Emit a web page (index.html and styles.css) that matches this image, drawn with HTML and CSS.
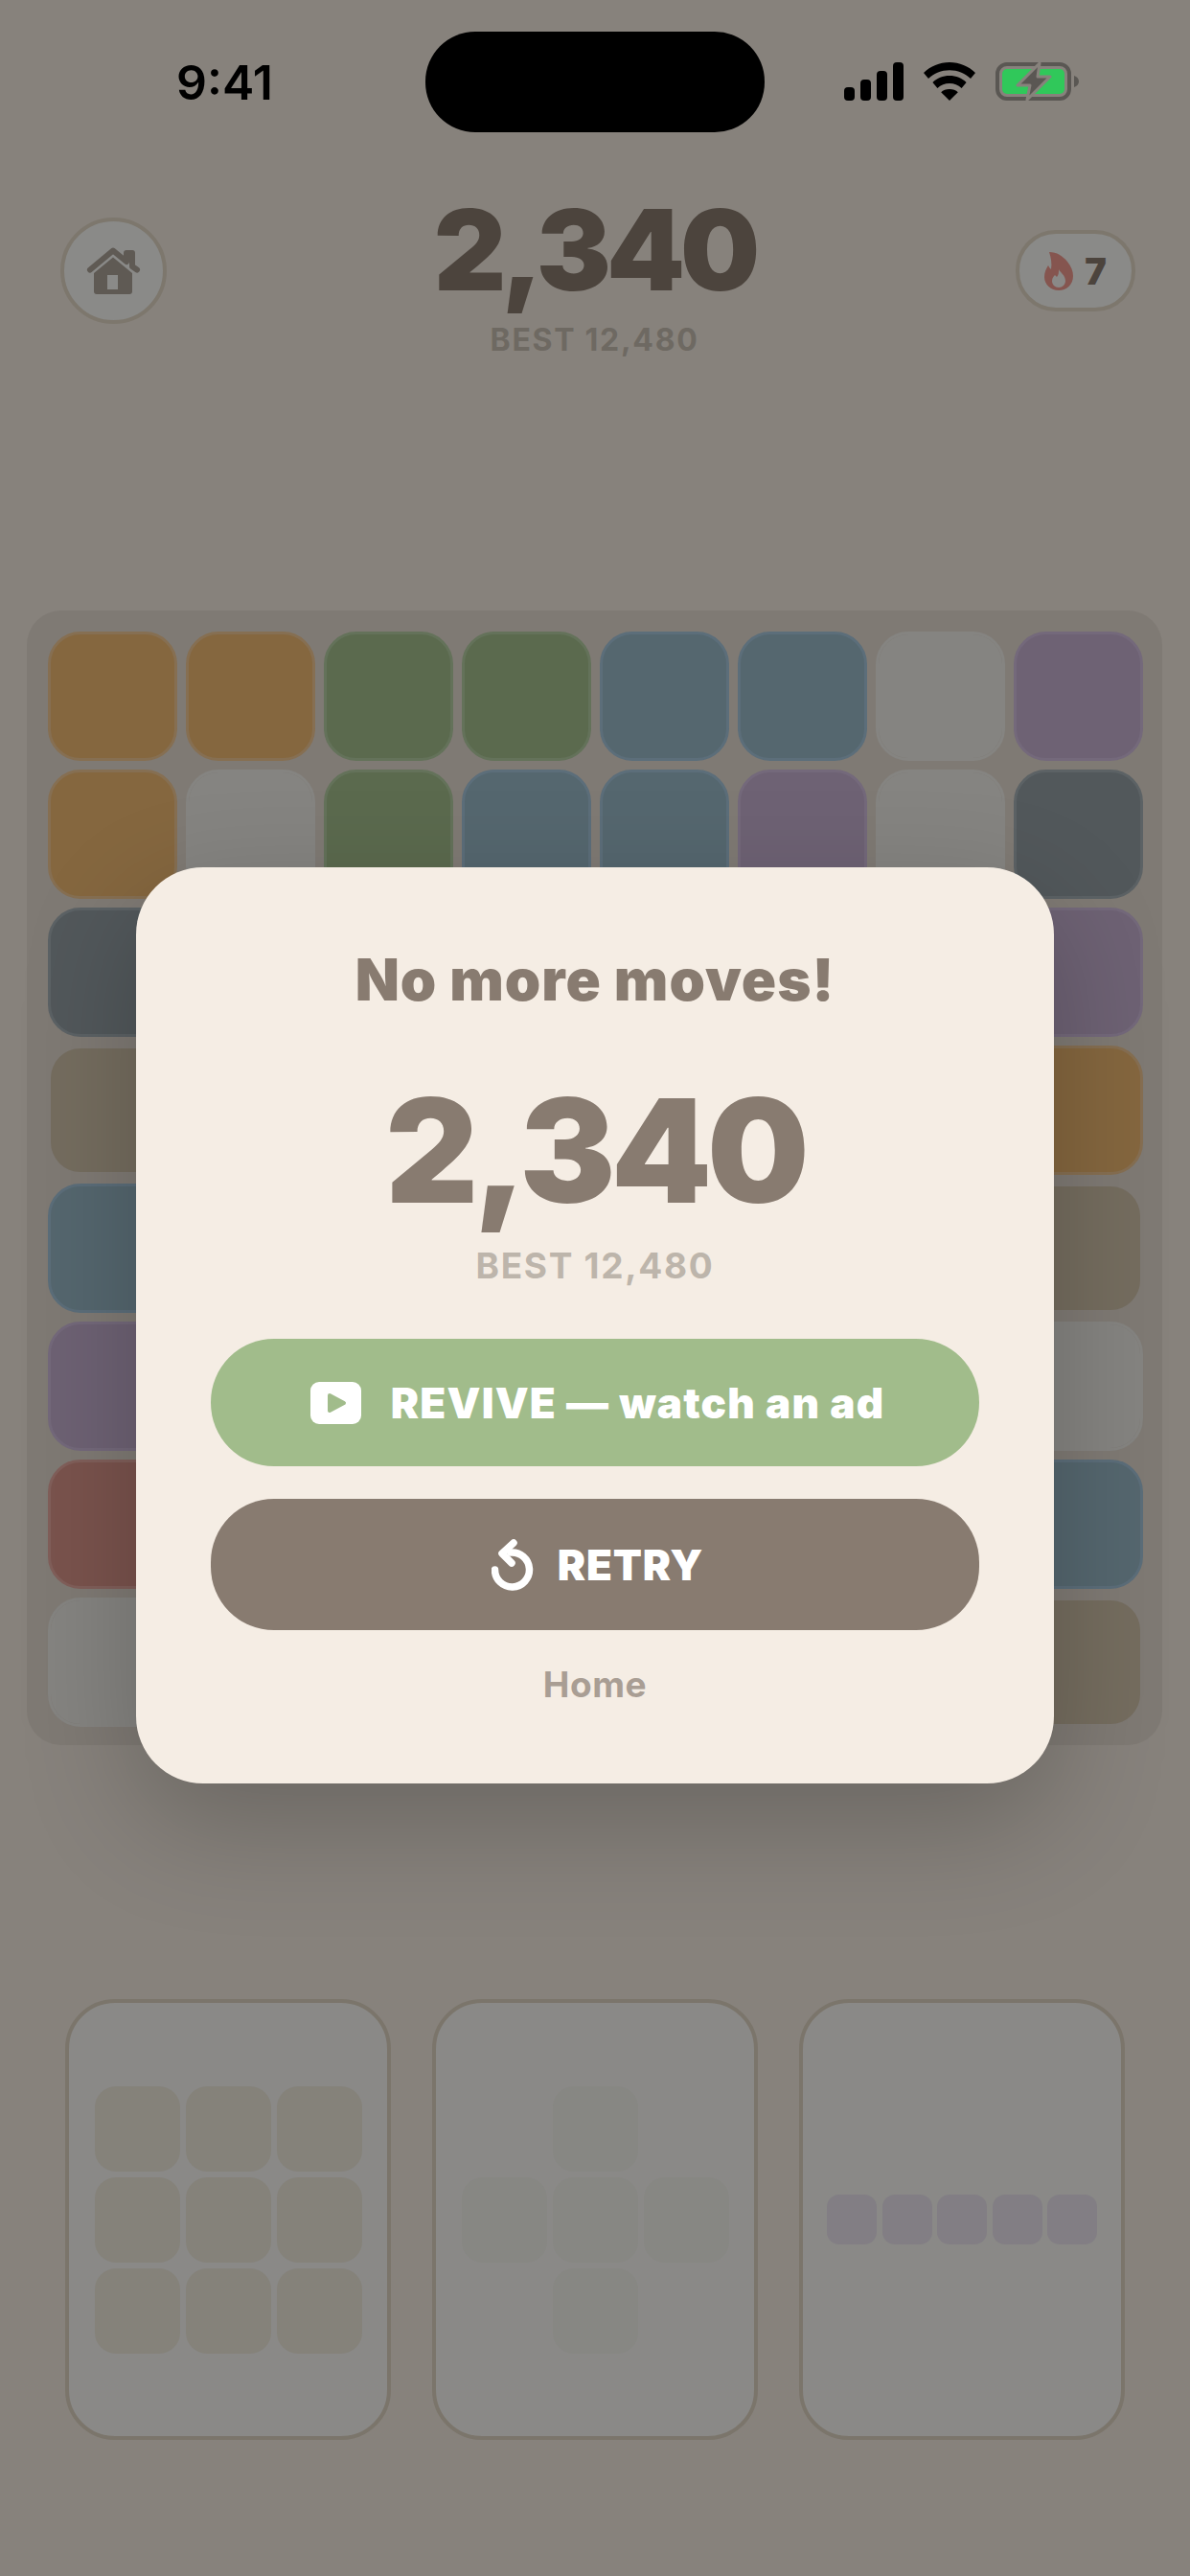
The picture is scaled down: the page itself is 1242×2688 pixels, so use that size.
FILE: index.html
```html
<!DOCTYPE html>
<html lang="en">
<head>
    <meta charset="UTF-8">
    <meta name="viewport" content="width=device-width, initial-scale=1.0">
    <title>Block Puzzle - Game Over</title>
    <link rel="stylesheet" href="styles.css">
</head>
<body>
    <div class="screen">
        <div class="statusbar">
            <span class="time">9:41</span>
            <div class="island"></div>
            <div class="status-icons">
                <svg class="signal" width="62" height="40" viewBox="0 0 62 40">
                    <rect x="0" y="26" width="11" height="14" rx="4" />
                    <rect x="17" y="18" width="11" height="22" rx="4" />
                    <rect x="34" y="9" width="11" height="31" rx="4" />
                    <rect x="51" y="0" width="11" height="40" rx="4" />
                </svg>
                <svg class="wifi" width="54" height="40" viewBox="0 0 54 40">
                    <path d="M27 0C16.500 0 7.300 4 0 11l5 6c6-5.500 13.500-8.800 22-8.800S43 11.500 49 17l5-6C46.700 4 37.500 0 27 0z" />
                    <path d="M27 14c-7 0-12.800 2.500-17.600 6.900l5 6C18 23.700 22.300 22 27 22s9 1.700 12.600 4.900l5-6C39.800 16.500 34 14 27 14z" />
                    <path d="M27 28c-3.600 0-6.600 1.200-8.800 3.200L27 40l8.800-8.800C33.600 29.200 30.600 28 27 28z" />
                </svg>
                <svg class="battery" width="87" height="40" viewBox="0 0 87 40">
                    <rect x="2" y="2" width="75" height="36" rx="10" fill="none" stroke="#5a5753" stroke-width="4" />
                    <rect x="7" y="7" width="65" height="26" rx="5" fill="#30c85a" />
                    <path d="M82 14c3 1 5 3 5 6s-2 5-5 6z" fill="#5a5753" />
                    <path d="M46 1L23 24h13l-3 15 24-24H44z" fill="#5a5753" stroke="#87827c" stroke-width="3" stroke-linejoin="round" />
                </svg>
            </div>
        </div>

        <div class="topbar">
            <button class="round-btn">
                <svg width="58" height="52" viewBox="0 0 58 52">
                    <path d="M4 24.500L28 4.500l14 11.500V7h6v14l5 3.500" fill="none" stroke="#5f5a54" stroke-width="6" stroke-linecap="round" stroke-linejoin="round" />
                    <path d="M28 11.500L8 28v19a3 3 0 0 0 3 3h34a3 3 0 0 0 3-3V28zM22 30h11v15H22z" fill="#5f5a54" fill-rule="evenodd" />
                </svg>
            </button>
            <div class="score-box">
                <div class="score">2,340</div>
                <div class="best">BEST 12,480</div>
            </div>
            <div class="streak">
                <svg width="30" height="40" viewBox="0 0 30 40">
                    <path d="M5 0c8 0 14 4 19 10 4 5 6 10 6 15 0 9-7 15-15 15S0 34 0 26c0-5 2-9 4-12 1 2 2 3 3 4 1-6 0-12-2-18z" fill="#85554f" />
                    <path d="M15 18c1 3 7 6 7 12 0 4-3 7-7 7s-7-3-7-7c0-3 2-5 3-6l2 2c2-2 2-5 2-8z" fill="#8a8987" />
                </svg>
                <span class="streak-num">7</span>
            </div>
        </div>

        <div class="board">
            <div class="tile orange"></div><div class="tile orange"></div><div class="tile green"></div><div class="tile green"></div><div class="tile blue"></div><div class="tile blue"></div><div class="tile empty"></div><div class="tile purple"></div>
            <div class="tile orange"></div><div class="tile empty"></div><div class="tile green"></div><div class="tile blue"></div><div class="tile blue"></div><div class="tile purple"></div><div class="tile empty"></div><div class="tile dark"></div>
            <div class="tile dark"></div><div class="tile empty"></div><div class="tile green"></div><div class="tile blue"></div><div class="tile empty"></div><div class="tile purple"></div><div class="tile empty"></div><div class="tile purple"></div>
            <div class="tile beige"></div><div class="tile empty"></div><div class="tile empty"></div><div class="tile beige"></div><div class="tile empty"></div><div class="tile empty"></div><div class="tile orange"></div><div class="tile orange"></div>
            <div class="tile blue"></div><div class="tile blue"></div><div class="tile empty"></div><div class="tile beige"></div><div class="tile empty"></div><div class="tile green"></div><div class="tile empty"></div><div class="tile beige"></div>
            <div class="tile purple"></div><div class="tile empty"></div><div class="tile red"></div><div class="tile empty"></div><div class="tile empty"></div><div class="tile green"></div><div class="tile empty"></div><div class="tile empty"></div>
            <div class="tile red"></div><div class="tile red"></div><div class="tile red"></div><div class="tile empty"></div><div class="tile blue"></div><div class="tile empty"></div><div class="tile empty"></div><div class="tile blue"></div>
            <div class="tile empty"></div><div class="tile empty"></div><div class="tile empty"></div><div class="tile dark"></div><div class="tile dark"></div><div class="tile empty"></div><div class="tile empty"></div><div class="tile beige"></div>
        </div>

        <div class="tray">
            <div class="piece-card">
                <div class="piece grid3">
                    <i class="mini sand"></i><i class="mini sand"></i><i class="mini sand"></i>
                    <i class="mini sand"></i><i class="mini sand"></i><i class="mini sand"></i>
                    <i class="mini sand"></i><i class="mini sand"></i><i class="mini sand"></i>
                </div>
            </div>
            <div class="piece-card">
                <div class="piece grid3">
                    <i class="mini none"></i><i class="mini grey"></i><i class="mini none"></i>
                    <i class="mini grey"></i><i class="mini grey"></i><i class="mini grey"></i>
                    <i class="mini none"></i><i class="mini grey"></i><i class="mini none"></i>
                </div>
            </div>
            <div class="piece-card">
                <div class="piece line5">
                    <i class="mini small"></i><i class="mini small"></i><i class="mini small"></i><i class="mini small"></i><i class="mini small"></i>
                </div>
            </div>
        </div>

        <div class="modal">
            <h2 class="modal-title">No more moves!</h2>
            <div class="modal-score">2,340</div>
            <div class="modal-best">BEST 12,480</div>
            <button class="btn btn-revive">
                <svg width="53" height="44" viewBox="0 0 53 44">
                    <rect width="53" height="44" rx="9" fill="#fff" />
                    <path d="M20 14l15 8-15 8z" fill="#a1bc8b" stroke="#a1bc8b" stroke-width="4" stroke-linejoin="round" />
                </svg>
                <span>REVIVE — watch an ad</span>
            </button>
            <button class="btn btn-retry">
                <svg width="44" height="54" viewBox="0 0 44 54">
                    <path d="M20 14A18 18 0 1 1 3.500 32" fill="none" stroke="#fff" stroke-width="7.500" stroke-linecap="round" />
                    <path d="M23 4L11 15l10 10" fill="none" stroke="#fff" stroke-width="7.500" stroke-linecap="round" stroke-linejoin="round" />
                </svg>
                <span>RETRY</span>
            </button>
            <div class="home-link">Home</div>
        </div>
    </div>
</body>
</html>
```

FILE: styles.css
```css
* {
    box-sizing: border-box;
}
body {
    margin: 0;
    font-family: Inter, "Noto Sans", sans-serif;
}
.screen {
    position: relative;
    width: 1242px;
    height: 2688px;
    overflow: hidden;
    background: #87827c;
    display: flex;
    flex-direction: column;
}

/* status bar */
.statusbar {
    height: 138px;
    padding: 33px 0 0 184px;
    display: flex;
    align-items: flex-start;
}
.time {
    width: 260px;
    margin-top: 28px;
    font-size: 50px;
    line-height: 50px;
    font-weight: 600;
    color: #000;
}
.island {
    width: 354px;
    height: 105px;
    border-radius: 52px;
    background: #000;
}
.status-icons {
    display: flex;
    align-items: center;
    gap: 21px;
    margin: 32px 0 0 83px;
}
.signal, .wifi {
    fill: #000;
}

/* header */
.topbar {
    height: 499px;
    padding: 65px 57px 0 63px;
    display: flex;
    align-items: flex-start;
    justify-content: space-between;
}
.round-btn {
    width: 111px;
    height: 111px;
    margin-top: 24px;
    padding: 0;
    border-radius: 50%;
    border: 4px solid #7d776d;
    background: #8a8a88;
    display: flex;
    align-items: center;
    justify-content: center;
}
.score-box {
    margin-left: 7px;
    text-align: center;
}
.score {
    font-size: 117px;
    line-height: 116px;
    font-weight: 900;
    letter-spacing: -5px;
    color: #4c443d;
}
.best {
    margin-top: 18px;
    font-size: 32px;
    line-height: 36px;
    font-weight: 700;
    letter-spacing: 1.700px;
    color: #6e6962;
}
.streak {
    width: 125px;
    height: 85px;
    margin-top: 37px;
    border-radius: 42px;
    border: 4px solid #7d776d;
    background: #8a8a88;
    display: flex;
    align-items: center;
    justify-content: center;
    gap: 12px;
}
.streak-num {
    font-size: 38px;
    font-weight: 900;
    color: #4c443d;
}

/* board */
.board {
    width: 1185px;
    height: 1184px;
    margin-left: 28px;
    padding: 22px;
    border-radius: 36px;
    background: #7f7a74;
    display: grid;
    grid-template-columns: repeat(8, 135px);
    grid-auto-rows: 135px;
    gap: 9px;
}
.tile {
    border-radius: 34px;
    border: 3px solid transparent;
    background-clip: padding-box;
}
.orange { background-color: #85673f; border-color: #866f52; background-clip: border-box; }
.green { background-color: #5b6a4e; border-color: #64725a; background-clip: border-box; }
.blue { background-color: #55676f; border-color: #5c6e7a; background-clip: border-box; }
.purple { background-color: #6e6274; border-color: #74697b; background-clip: border-box; }
.dark { background-color: #52585b; border-color: #5c6265; background-clip: border-box; }
.red { background-color: #7a534d; border-color: #815f5a; background-clip: border-box; }
.beige { background-color: #756d5f; }
.empty { background-color: #858481; border-color: #858481; }

/* pieces tray */
.tray {
    margin-top: 265px;
    padding: 0 68px;
    display: flex;
    gap: 43px;
}
.piece-card {
    width: 340px;
    height: 460px;
    border-radius: 52px;
    border: 4px solid #7b756b;
    background: #8a8987;
    display: flex;
    align-items: center;
    justify-content: center;
}
.piece {
    display: grid;
}
.grid3 {
    grid-template-columns: repeat(3, 89px);
    grid-auto-rows: 89px;
    gap: 6px;
}
.line5 {
    grid-template-columns: repeat(5, 52px);
    grid-auto-rows: 52px;
    gap: 5.500px;
}
.mini {
    display: block;
    border-radius: 22px;
}
.sand { background: #85827a; }
.grey { background: #878783; }
.none { background: transparent; }
.small {
    border-radius: 13px;
    background: #827e84;
}

/* game over modal */
.modal {
    position: absolute;
    left: 142px;
    top: 905px;
    width: 958px;
    height: 956px;
    padding-top: 81px;
    border-radius: 70px;
    background: #f5ede4;
    box-shadow: 0 40px 120px rgba(0, 0, 0, 0.22);
    display: flex;
    flex-direction: column;
    align-items: center;
}
.modal-title {
    margin: 0;
    font-size: 60px;
    line-height: 72px;
    font-weight: 900;
    letter-spacing: 1px;
    color: #887b70;
}
.modal-score {
    margin-top: 68px;
    font-size: 150px;
    line-height: 150px;
    font-weight: 900;
    letter-spacing: -5px;
    color: #887b70;
}
.modal-best {
    margin-top: 23px;
    font-size: 37px;
    line-height: 44px;
    font-weight: 700;
    letter-spacing: 1.700px;
    color: #bdb5ab;
}
.btn {
    width: 802px;
    padding: 0 0 0 5px;
    border: none;
    border-radius: 66px;
    color: #fff;
    font-family: inherit;
    font-weight: 900;
    display: flex;
    align-items: center;
    justify-content: center;
}
.btn-revive {
    height: 133px;
    margin-top: 54px;
    gap: 31px;
    font-size: 44px;
    letter-spacing: 1.200px;
    background: #a1bc8b;
}
.btn-retry {
    height: 137px;
    margin-top: 34px;
    gap: 25px;
    font-size: 44px;
    letter-spacing: 0.800px;
    background: #887b70;
}
.home-link {
    margin-top: 35px;
    font-size: 37px;
    line-height: 44px;
    font-weight: 700;
    letter-spacing: 0.600px;
    color: #a99e94;
}
```
